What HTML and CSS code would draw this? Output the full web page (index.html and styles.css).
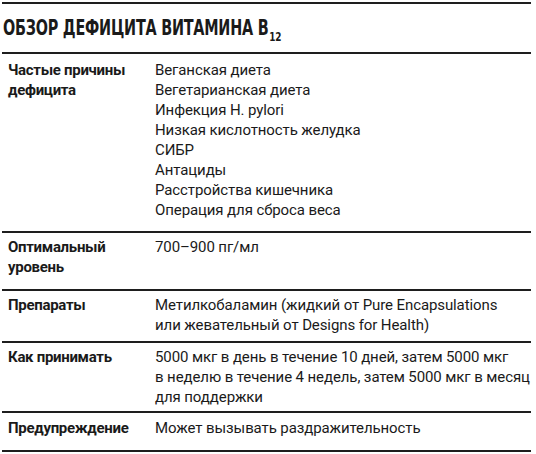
FILE: index.html
```html
<!DOCTYPE html>
<html lang="ru">
<head>
<meta charset="utf-8">
<link rel="stylesheet" href="styles.css">
</head>
<body>
<div class="sheet">
  <h1 class="title"><span class="title-text">ОБЗОР ДЕФИЦИТА ВИТАМИНА В<sub class="sub">12</sub></span></h1>
  <div class="row row-causes">
    <div class="label">Частые причины<br>дефицита</div>
    <div class="value">Веганская диета<br>Вегетарианская диета<br>Инфекция H. pylori<br>Низкая кислотность желудка<br>СИБР<br>Антациды<br>Расстройства кишечника<br>Операция для сброса веса</div>
  </div>
  <div class="row row-level">
    <div class="label">Оптимальный<br>уровень</div>
    <div class="value">700–900 пг/мл</div>
  </div>
  <div class="row row-preps">
    <div class="label">Препараты</div>
    <div class="value">Метилкобаламин (жидкий от Pure Encapsulations<br>или жевательный от Designs for Health)</div>
  </div>
  <div class="row row-how">
    <div class="label">Как принимать</div>
    <div class="value">5000 мкг в день в течение 10 дней, затем 5000 мкг<br>в неделю в течение 4 недель, затем 5000 мкг в месяц<br>для поддержки</div>
  </div>
  <div class="row row-warn">
    <div class="label">Предупреждение</div>
    <div class="value">Может вызывать раздражительность</div>
  </div>
</div>
</body>
</html>
```
FILE: styles.css
```css
html, body {
  margin: 0;
  padding: 0;
  background: #ffffff;
}
.sheet {
  margin: 2px 0 0 2px;
  width: 529px;
  border-top: 2px solid #1e1e1e;
  color: #1a1a1a;
  font-family: Roboto, "Liberation Sans", sans-serif;
}
.title {
  margin: 0;
  height: 50px;
  box-sizing: border-box;
  padding: 12px 0 0 1px;
  border-bottom: 2px solid #1e1e1e;
  font-family: "DejaVu Sans Condensed", "DejaVu Sans", sans-serif;
  font-weight: bold;
  font-size: 21px;
  line-height: 24px;
  white-space: nowrap;
}
.title-text {
  display: inline-block;
  transform: scaleX(0.762);
  transform-origin: left center;
  letter-spacing: -0.3px;
}
.sub {
  font-size: 13px;
  vertical-align: -6px;
  line-height: 0;
  margin-left: 1px;
}
.row {
  display: grid;
  grid-template-columns: 147px 1fr;
  border-bottom: 2px solid #1e1e1e;
  padding: 6px 0 8px 6px;
  font-size: 15px;
  line-height: 20px;
}
.label {
  font-weight: 700;
  letter-spacing: -0.3px;
}
.value {
  white-space: nowrap;
  letter-spacing: -0.1px;
}
.row-causes { padding-bottom: 11px; }
.row-level { padding-top: 4px; padding-bottom: 12px; }
.row-preps { padding-top: 4px; padding-bottom: 6px; }
.row-how { padding-top: 4px; padding-bottom: 4px; }
.row-warn { padding-top: 5px; padding-bottom: 12px; }
```
